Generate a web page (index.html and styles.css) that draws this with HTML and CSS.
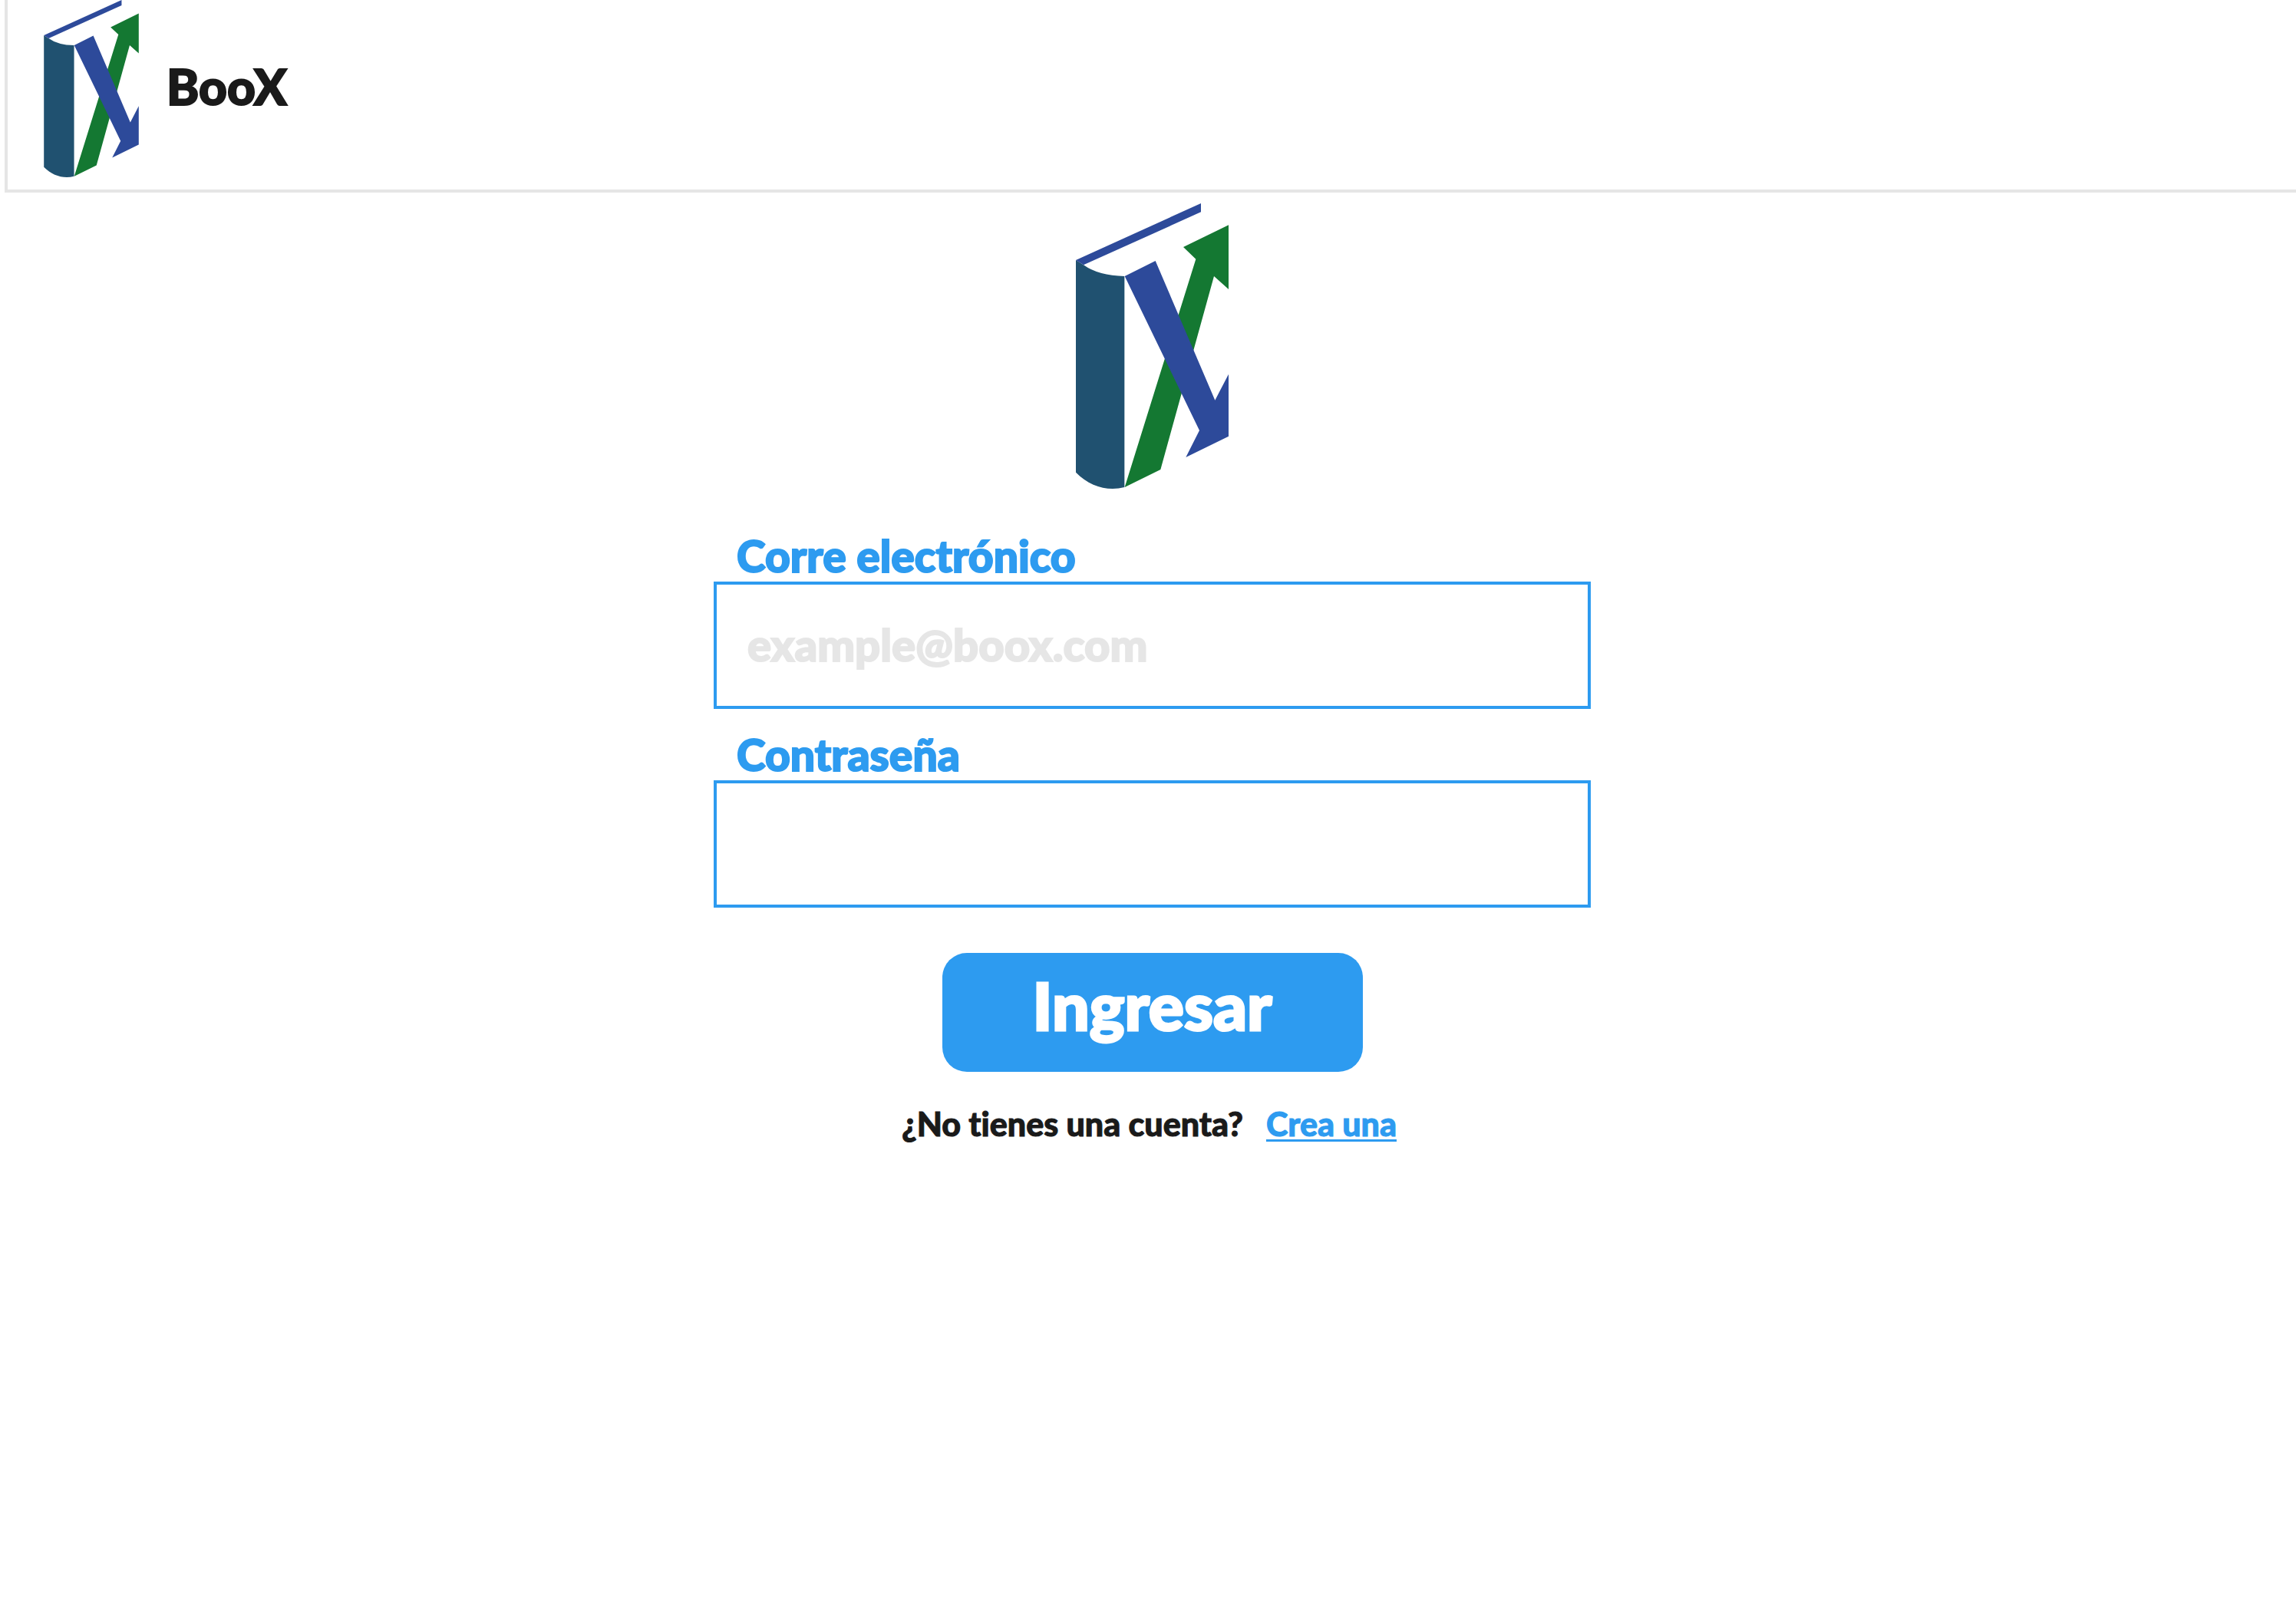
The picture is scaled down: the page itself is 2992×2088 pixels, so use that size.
FILE: index.html
```html
<!DOCTYPE html>
<html lang="es">
<head>
<meta charset="utf-8">
<meta name="viewport" content="width=device-width, initial-scale=1">
<title>BooX</title>
<link rel="stylesheet" href="styles.css">
</head>
<body>
<svg width="0" height="0" class="sprite" aria-hidden="true">
  <symbol id="boox-logo" viewBox="66 45 597 1116">
    <path fill="#147832" d="M257 1155 L397 1086 L606 330 L663 381 V130 L486 216 L535 263 Z"/>
    <path fill="#2d4a9a" d="M257 330 L377 270 L610 815 L663 713 V956 L496 1038 L549 933 Z"/>
    <path fill="#205170" d="M66 267 L96 286 Q154 328 256 330 V1155 C190 1172 120 1152 66 1097 Z"/>
    <path fill="#2d4a9a" d="M66 267 L555 45 V79 L96 286 Z"/>
  </symbol>
</svg>
<header class="topbar">
  <svg class="topbar-logo" aria-hidden="true"><use href="#boox-logo"/></svg>
  <span class="brand">BooX</span>
</header>
<main class="login">
  <svg class="login-logo" role="img" aria-label="BooX"><use href="#boox-logo"/></svg>
  <form class="form">
    <label class="label" for="email">Corre electrónico</label>
    <input class="input" id="email" type="email" placeholder="example@boox.com">
    <label class="label" for="password">Contraseña</label>
    <input class="input" id="password" type="password">
    <button class="submit" type="submit">Ingresar</button>
  </form>
  <p class="signup"><span>¿No tienes una cuenta?</span><a class="signup-link" href="#">Crea una</a></p>
</main>
</body>
</html>
```
FILE: styles.css
```css
* {
  box-sizing: border-box;
}

body {
  margin: 0;
  background: #fff;
  color: #1a1a1a;
  font-family: Lato, "Open Sans", sans-serif;
  font-weight: 900;
  font-variant-ligatures: none;
}

.sprite {
  display: block;
}

.topbar {
  display: flex;
  align-items: flex-start;
  gap: 36px;
  margin-left: 6px;
  padding: 0 0 16px 47px;
  border: solid #e5e5e5;
  border-width: 0 0 4px 4px;
}

.topbar-logo {
  width: 124px;
  height: 231px;
}

.brand {
  padding-top: 73px;
  font-size: 64px;
  line-height: 80px;
  -webkit-text-stroke: 2px currentColor;
}

.login {
  display: flex;
  flex-direction: column;
  align-items: center;
  padding: 14px 0 0 11px;
}

.login-logo {
  width: 199px;
  height: 372px;
}

.form {
  display: flex;
  flex-direction: column;
  width: 1143px;
  max-width: 100%;
  margin-top: 28px;
}

.label {
  margin-top: 25px;
  padding-left: 30px;
  color: #2d9bf0;
  font-size: 57px;
  line-height: 68px;
  -webkit-text-stroke: 2px currentColor;
}

.input {
  height: 166px;
  padding: 0 40px 4px;
  border: 4px solid #2d9bf0;
  border-radius: 0;
  background: #fff;
  color: #1a1a1a;
  font: inherit;
  font-size: 58px;
  -webkit-text-stroke: 2px currentColor;
}

.input::placeholder {
  color: #e6e6e6;
  opacity: 1;
}

.submit {
  align-self: center;
  width: 548px;
  height: 155px;
  margin-top: 59px;
  padding: 0 0 20px;
  border: 0;
  border-radius: 32px;
  background: #2d9bf0;
  color: #fff;
  font: inherit;
  font-size: 86px;
  -webkit-text-stroke: 3px currentColor;
}

.signup {
  display: flex;
  gap: 30px;
  margin: 40px 0 0;
  padding-right: 8px;
  font-size: 43px;
  line-height: 56px;
  -webkit-text-stroke: 1px currentColor;
}

.signup-link {
  color: #2d9bf0;
  text-decoration-thickness: 3px;
  text-underline-offset: 4px;
}
```
